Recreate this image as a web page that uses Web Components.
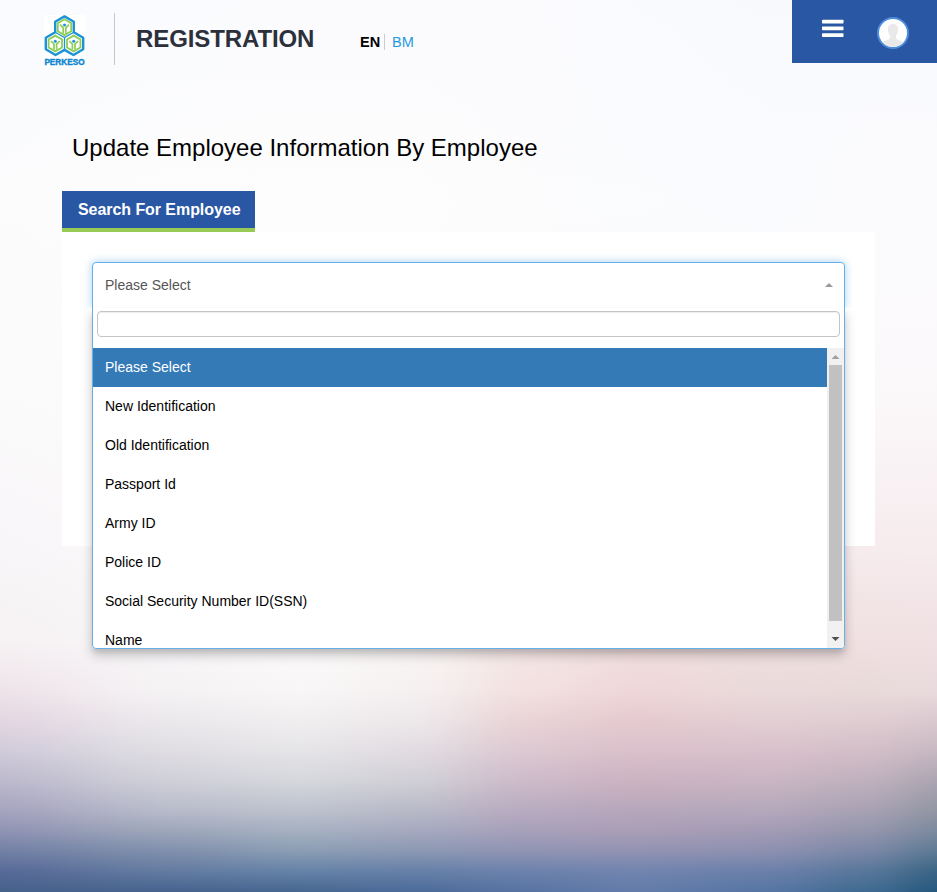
<!DOCTYPE html>
<html lang="en">
<head>
<meta charset="utf-8">
<title>Registration</title>
<style>
html,body{margin:0;height:100%;overflow:hidden}
body{font-family:"Liberation Sans",Arial,sans-serif;font-size:14px;color:#000}
</style>
</head>
<body>
<reg-page></reg-page>
<script>
const define = (name, html, setup) => customElements.define(name, class extends HTMLElement {
  constructor() {
    super();
    this.attachShadow({mode: 'open'}).innerHTML = html;
  }
  connectedCallback() { if (setup) setup(this); }
});

/* Soft backdrop: thin rows, each a horizontal gradient through interpolated colours */
define('soft-backdrop', `<style>
:host{position:absolute;inset:0;z-index:-1;overflow:hidden;display:flex;flex-direction:column}
div{flex:0 0 2px}
</style>`, el => {
  const ys = [0, 200, 400, 550, 640, 690, 720, 750, 780, 810, 830, 850, 870, 892];
  const cols = [
    [0,   'f9fbfe fcfcfd fbfafb f8f6f8 f6f2f4 eee3e9 e3d6e1 d0cbdb bcb9cc a5a3bf 8f93b3 7280a5 576a98 45608a'],
    [160, 'fafbfe fdfdfd fcfbfc faf8f9 f8f6f8 f5f2f4 ebe8ec dfdde2 cfcfd9 b7bac9 9da6ba 7f8fac 647ba0 44618d'],
    [300, 'fbfbfe fdfdfd fdfcfd fcfbfb fcfafa f8f6f7 f0eeef e5e4e7 d5d7dc bcc1cd a5b0c1 8b9db4 6583a7 45658f'],
    [420, 'fbfbfe fdfdfd fdfcfd fcf9f9 faf6f5 f5f0f0 ede8ea e1dbe1 d0cfd6 b8b9c7 a5a9bf 8b98b3 6780a8 4a6a99'],
    [520, 'fbfbfe fcfcfd fcfbfc f9f2f2 f5e8e7 f3e1e1 e9d4d7 dcc9d1 cdbbca b8abc0 a6a0bb 9094b3 6c82ad 5671a1'],
    [635, 'f9fafe fbfcfe fcfafb f7eeef f1e0e0 efd7d8 e5cacf dac0ca cbb3c1 b6a6bc aa9eb6 9292b3 7184ae 627baa'],
    [770, 'f8f9fd fafbfe fbf9fb f6ecee f0e0df eadadb e2cfd4 d9c1cb c9b5c3 b4a8bb a29bb5 8d90b0 6b80ab 5474a2'],
    [870, 'f8f9fd fbfbfd fbf8fa f6ebed f0e0e1 e9dada dfcdd2 d2bec7 bfb0bd a7a1b3 9395ac 7a87a6 587799 3d6890'],
    [937, 'f8f9fd fbfbfd fbf8fa f6ebed f0e0e3 e9dadd dac9cf c7b8c1 aca5b2 9296a3 7c8a9f 5e7a94 3b6585 24577e']
  ].map(([x, l]) => [x, l.split(' ').map(h => [0, 2, 4].map(i => parseInt(h.substr(i, 2), 16)))]);
  const mix = (a, b, t) => a.map((v, i) => v + (b[i] - v) * t);
  const rows = document.createDocumentFragment();
  for (let y = 0; y < 892; y += 2) {
    const k = ys.findIndex(v => v > y) - 1;
    const t = (y - ys[k]) / (ys[k + 1] - ys[k]);
    const line = cols.map(([x, c]) => [x, mix(c[k], c[k + 1], t)]);
    const stops = [];
    line.forEach(([x, c], i) => {
      const next = line[i + 1];
      if (!next) return stops.push([x, c]);
      for (const s of [0, .25, .5, .75]) stops.push([x + (next[0] - x) * s, mix(c, next[1], (s + s * s * (3 - 2 * s)) / 2)]);
    });
    const d = document.createElement('div');
    d.style.background = 'linear-gradient(90deg,' + stops.map(([x, c]) => `rgb(${c.map(v => v.toFixed(1)).join(' ')}) ${x}px`).join(',') + ')';
    rows.append(d);
  }
  el.shadowRoot.append(rows);
});

define('perkeso-logo', `<style>
:host{display:block;width:41px;height:52px}
svg{display:block}
</style>
<svg width="41" height="52" viewBox="0 0 41 52">
<rect width="41" height="51" fill="#fff"/>
<path d="M20.500 1.400 29.800 6.700V17.300L39.200 22.700V34.300L29.500 40 20.500 34.900 11.500 40 1.800 34.300V22.700L11.200 17.300V6.700Z" fill="#fff" stroke="#1b93d6" stroke-width="2.400" stroke-linejoin="round"/>
<path d="M11.200 17.300 20.500 22.500 29.800 17.300M20.500 22.500V34.900" fill="none" stroke="#1b93d6" stroke-width="1.300"/>
<defs><g id="cell" fill="none" stroke="#8dcd56">
<path d="M0-7.900 6.700-4V4L0 7.900-6.700 4V-4Z" stroke-width="1.800"/>
<path d="M-4.400-2.500-1.300.7V6M4.400-2.500 1.300.7V6" stroke-width="1.700"/>
<circle cx="0" cy="-2.300" r="1.500" fill="#1b93d6" stroke="none"/></g></defs>
<use href="#cell" x="20.500" y="12.200"/><use href="#cell" x="11.300" y="28.500"/><use href="#cell" x="29.700" y="28.500"/>
<text x="0.400" y="50" textLength="40.200" lengthAdjust="spacingAndGlyphs" font-family="Liberation Sans,Arial,sans-serif" font-weight="700" font-size="8.200" fill="#0c86cf" stroke="#0c86cf" stroke-width=".4">PERKESO</text>
</svg>`);

define('lang-switch', `<style>
:host{display:flex;font-size:14.500px;line-height:16px}
b{width:24px;border-right:1px solid #ccc;letter-spacing:.2px}
span{padding-left:7px;color:#1f9ae0;letter-spacing:.2px}
</style><b>EN</b><span>BM</span>`);

define('user-bar', `<style>
:host{display:flex;width:145px;height:63px;background:#2957a4;box-sizing:border-box;padding:17px 28px 0 30px;justify-content:space-between;align-items:flex-start}
.menu{margin-top:2px}
svg{display:block}
</style>
<svg class="menu" width="22" height="19" viewBox="0 0 22 19"><g fill="#fff"><rect y=".7" width="21.500" height="3.700" rx=".6"/><rect y="7.500" width="21.500" height="3.700" rx=".6"/><rect y="14.200" width="21.500" height="3.700" rx=".6"/></g></svg>
<svg width="32" height="32" viewBox="0 0 32 32"><defs><clipPath id="c"><circle cx="16" cy="16" r="14"/></clipPath></defs>
<circle cx="16" cy="16" r="15" fill="#fff" stroke="#4d8ddc" stroke-width="2"/>
<path clip-path="url(#c)" fill="#e9e9e9" d="M16 7c3.500 0 5.200 2.300 5.100 5.400-.1 2.700-.9 4.600-2.200 6.200-.2 2.700.5 3.600 2.700 4.500 3 1.100 5.400 1.500 6.400 3.900V32H4V27c1-2.400 3.400-2.800 6.400-3.900 2.200-.9 2.900-1.800 2.700-4.500-1.300-1.600-2.100-3.500-2.200-6.200C10.800 9.300 12.500 7 16 7Z"/></svg>`);

define('site-header', `<style>
:host{display:flex;align-items:flex-start;height:78px;padding-left:44px}
perkeso-logo{margin-top:15px}
.rule{width:1px;height:52px;margin:13px 21px 0 29px;background:#c6c6c9}
h1{margin:25px 0 0;font-size:24px;line-height:28px;letter-spacing:-.1px;color:#2b303c;width:224px;white-space:nowrap}
lang-switch{margin-top:34px}
user-bar{margin-left:auto}
</style><perkeso-logo></perkeso-logo><div class="rule"></div><h1>REGISTRATION</h1><lang-switch></lang-switch><user-bar></user-bar>`);

define('tab-button', `<style>
:host{display:block;width:193px;box-sizing:border-box;height:41px;padding-left:16px;background:#2957a4;border-bottom:4px solid #97cb55;color:#fff;font-weight:700;font-size:16px;line-height:37px;letter-spacing:-.06px;white-space:nowrap}
</style><slot></slot>`);

define('select-option', `<style>
:host{display:block;height:39px;line-height:39px;padding-left:12px;box-sizing:border-box}
:host([active]){background:#337ab7;color:#fff}
</style><slot></slot>`);

define('scroll-rail', `<style>
:host{display:flex;flex-direction:column;align-items:center;width:17px;background:#f1f1f1}
i{width:13px;height:256px;background:#c1c1c1}
svg{display:block}
</style><svg width="17" height="17"><path d="M4.500 11 8.500 7l4 4Z" fill="#a0a0a0"/></svg><i></i><svg width="17" height="27"><path d="M4.500 16h8l-4 4Z" fill="#505050"/></svg>`);

define('search-select', `<style>
:host{display:block;width:753px;height:387px;box-sizing:border-box;border:1px solid #66afe9;border-radius:4px;background:#fff;position:relative}
.glow,.drop{position:absolute;inset:-1px -1px auto;height:46px;border-radius:4px 4px 0 0;box-shadow:0 0 8px rgba(102,175,233,.6);clip-path:inset(-10px -10px 0)}
.drop{inset:45px -1px -1px;height:auto;border-radius:0 0 4px 4px;box-shadow:0 6px 12px rgba(0,0,0,.22),0 4px 4px rgba(0,0,0,.06);clip-path:inset(0 -16px -20px)}
.value,.field,.list{position:relative}
.value{display:flex;justify-content:space-between;align-items:center;height:44px;padding:0 11px 0 12px;color:#555;border-bottom:1px solid #fcfcfc}
.field{height:26px;margin:3px 4px 11px;box-sizing:border-box;border:1px solid #c4c4c4;border-radius:4px;background:#fff;box-shadow:inset 0 1px 1px rgba(0,0,0,.07)}
.list{display:flex;height:300px;overflow:hidden;border-radius:0 0 3px 3px}
.items{flex:1;overflow:hidden}
</style>
<div class="glow"></div><div class="drop"></div>
<div class="value"><span>Please Select</span><svg width="8" height="4"><path d="M0 4 4 0l4 4Z" fill="#999"/></svg></div>
<div class="field"></div>
<div class="list"><div class="items"><slot></slot></div><scroll-rail></scroll-rail></div>`);

define('search-panel', `<style>
:host{display:block;width:813px;height:314px;box-sizing:border-box;padding:30px;background:#fff}
</style><slot></slot>`);

define('reg-page', `<style>
:host{display:block;position:relative;height:892px;overflow:hidden;z-index:0}
main{padding:56px 62px 0}
h2{margin:0 0 29px;padding-left:10px;font-weight:400;font-size:24px;line-height:28px;white-space:nowrap}
</style>
<soft-backdrop></soft-backdrop>
<site-header></site-header>
<main><h2>Update Employee Information By Employee</h2>
<tab-button>Search For Employee</tab-button>
<search-panel><search-select>
<select-option active>Please Select</select-option>
<select-option>New Identification</select-option>
<select-option>Old Identification</select-option>
<select-option>Passport Id</select-option>
<select-option>Army ID</select-option>
<select-option>Police ID</select-option>
<select-option>Social Security Number ID(SSN)</select-option>
<select-option>Name</select-option>
</search-select></search-panel></main>`);
</script>
</body>
</html>
